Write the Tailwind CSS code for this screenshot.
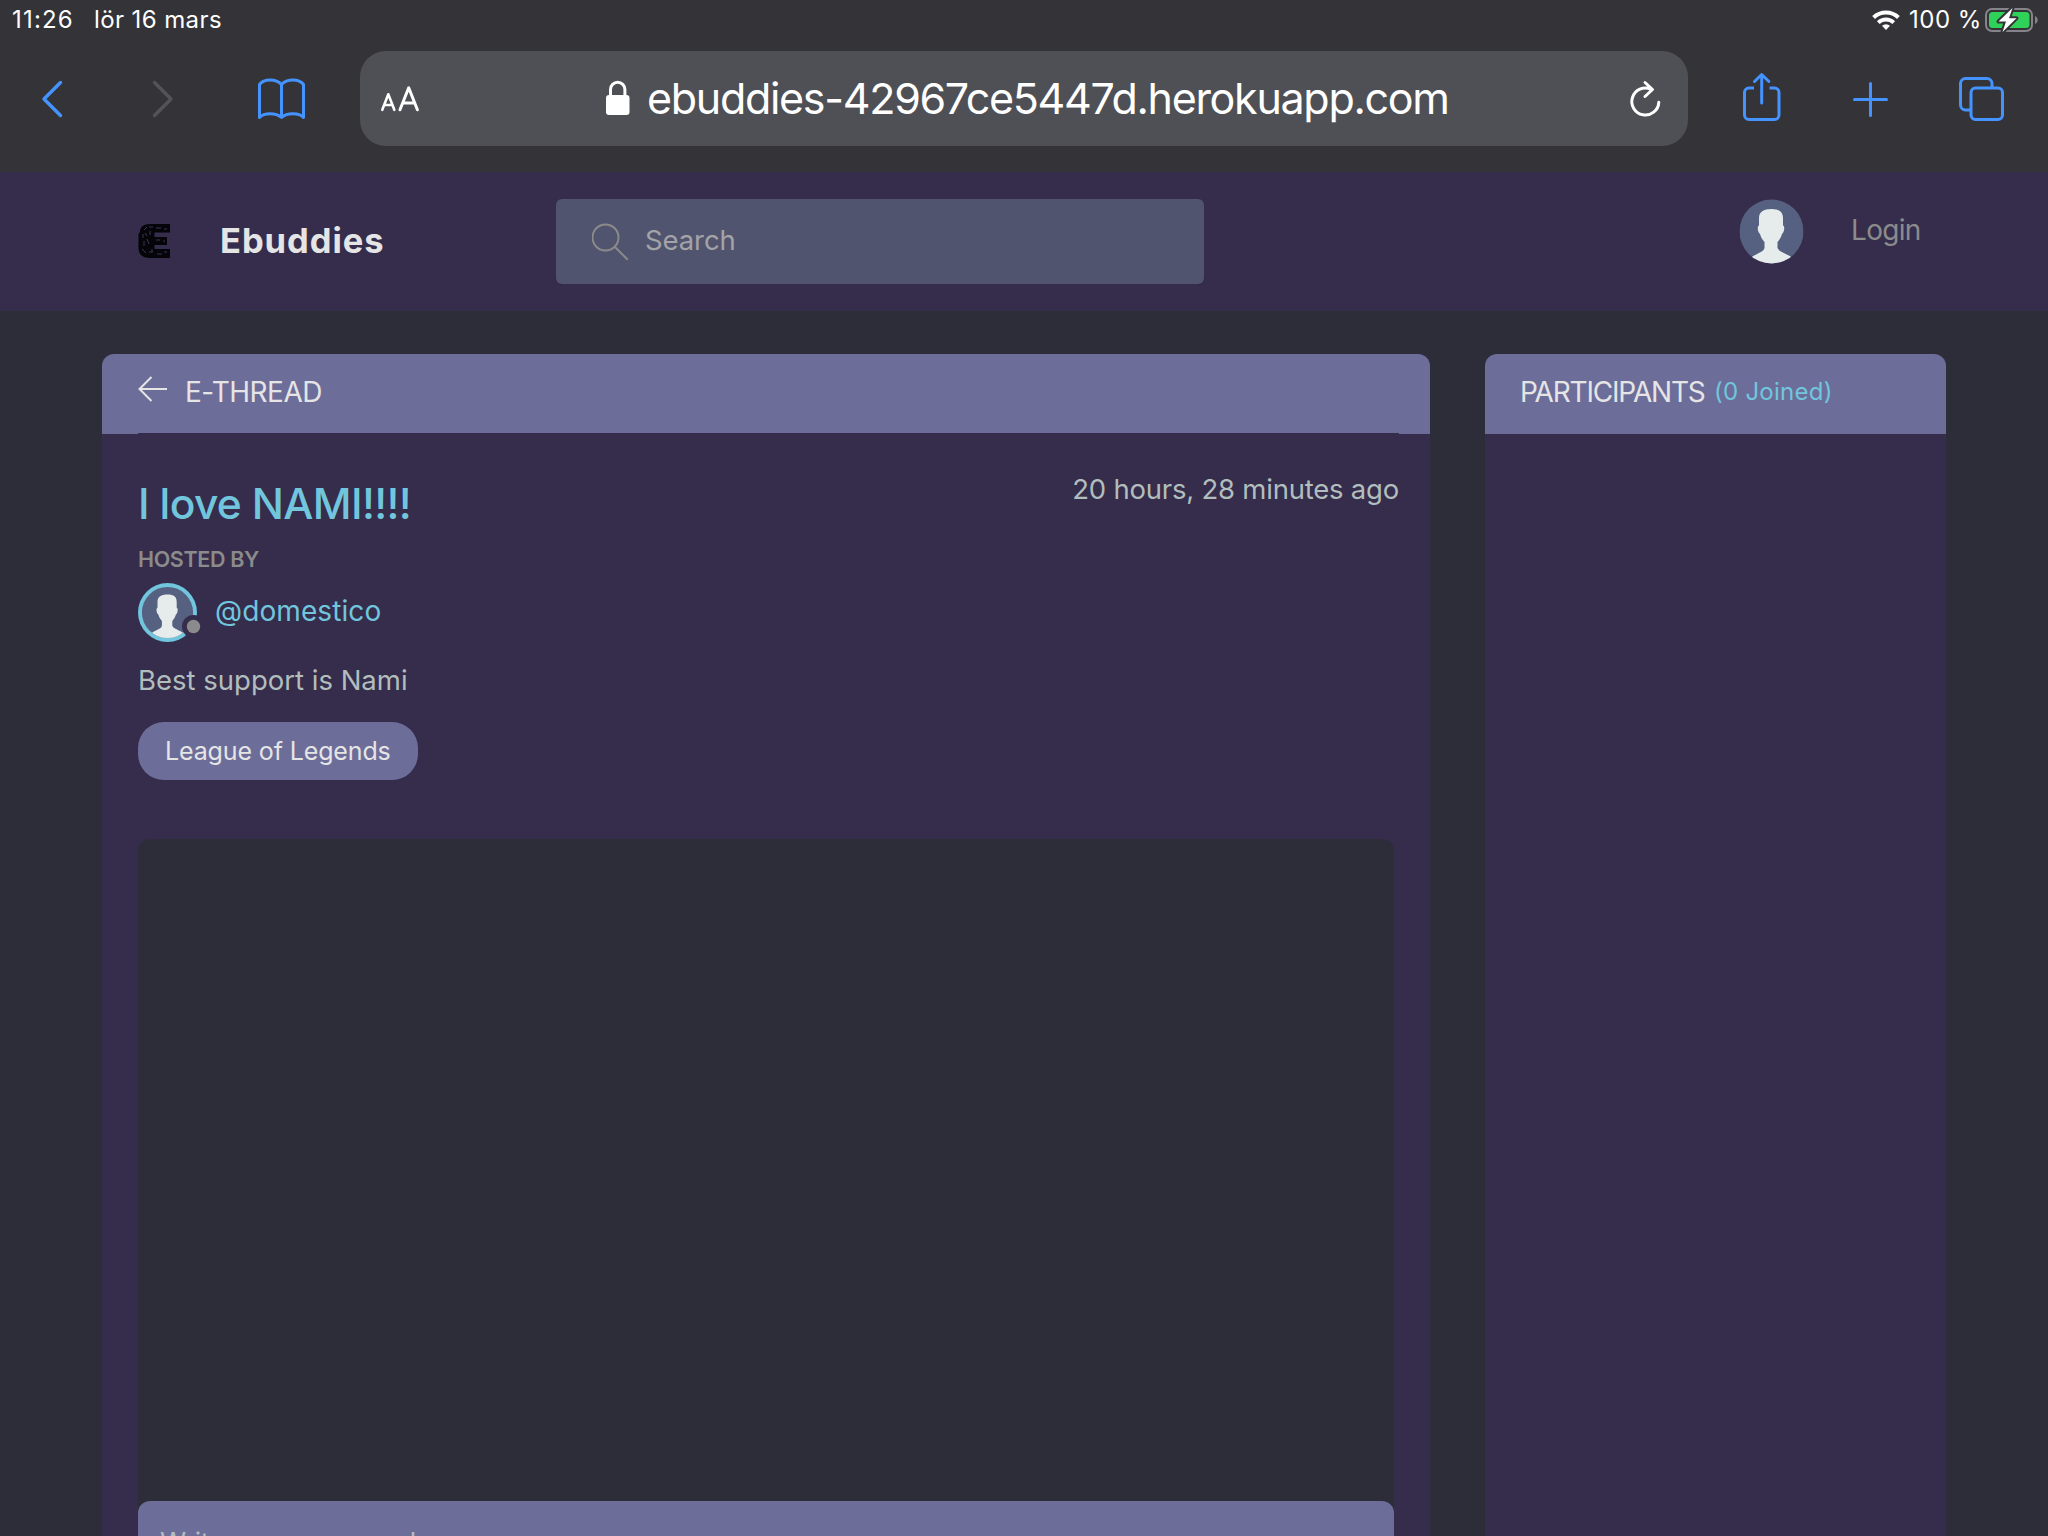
<!DOCTYPE html>
<html lang="sv">
<head>
<meta charset="utf-8">
<title>Ebuddies</title>
<script src="https://cdn.jsdelivr.net/npm/@tailwindcss/browser@4"></script>
</head>
<body class="w-[2048px] h-[1536px] overflow-hidden bg-[#2d2d39] font-['Inter',sans-serif]">
<div class="flex flex-col">
  <div class="h-[172px] bg-[#343338] text-white">
    <div class="flex h-10 items-center pl-3 pr-[10px] text-2xl leading-10">
      <span class="whitespace-nowrap tracking-[1.2px]">11:26</span>
      <span class="ml-[20px] whitespace-nowrap tracking-[0.4px]">lör 16 mars</span>
      <svg class="ml-auto h-10 w-[30px]" viewBox="1871 0 30 40" fill="none" stroke="#fff" stroke-width="4"><path d="M1873.600 17.500a18 18 0 0 1 24.800 0M1878.300 22.600a11.300 11.300 0 0 1 15.400 0"/><path d="M1886 30l-4-4.200a6 6 0 0 1 8 0z" fill="#fff" stroke="none"/></svg>
      <span class="ml-[8px] w-[74px] whitespace-nowrap tracking-[0.5px]">100 %</span>
      <svg class="h-10 w-[55px]" viewBox="1983 0 55 40"><rect x="1986" y="9" width="46" height="22" rx="6" fill="none" stroke="#85848a" stroke-width="2"/><path d="M2035 16v8c3.600-1.500 3.600-6.500 0-8z" fill="#85848a"/><rect x="1989" y="12" width="40.500" height="16" rx="3.500" fill="#30d158"/><path d="M2012.500 8l-14 13.500h7.500l-3.500 10.500 14-13.800h-7.500z" fill="#fff" stroke="#343338" stroke-width="4" paint-order="stroke" stroke-linejoin="round"/></svg>
    </div>
    <div class="mt-[11px] flex h-[95px] items-center">
      <svg class="ml-10 h-[95px] w-6" viewBox="40 51 24 95" fill="none" stroke="#4593ff" stroke-width="3.400" stroke-linecap="round" stroke-linejoin="round"><path d="M60.500 82.500L44 99l16.500 16.500"/></svg>
      <svg class="ml-[86px] h-[95px] w-6" viewBox="150 51 24 95" fill="none" stroke="#545458" stroke-width="3.400" stroke-linecap="round" stroke-linejoin="round"><path d="M154.500 82.500L171 99l-16.500 16.500"/></svg>
      <svg class="ml-[82px] h-[95px] w-[52px]" viewBox="256 51 52 95" fill="none" stroke="#4593ff" stroke-width="3" stroke-linejoin="round"><path d="M281.500 84.500C276 78.500 264 78.500 259.500 84.500V117.500C264 112.500 276 112.500 281.500 117.500C287 112.500 299 112.500 303.500 117.500V84.500C299 78.500 287 78.500 281.500 84.500V117.500"/></svg>
      <div class="ml-[52px] flex h-[95px] w-[1328px] items-center rounded-[26px] bg-[#4f5055]">
        <svg class="ml-5 h-[95px] w-[42px]" viewBox="380 51 42 95" fill="none" stroke="#fff" stroke-width="2.600" stroke-linecap="round" stroke-linejoin="round"><path d="M382.300 109.800l6-15.500 6 15.500M384.600 105h7.400"/><path d="M400 109.800l8.700-22 8.700 22M403 103h11.400" stroke-width="3"/></svg>
        <svg class="ml-[182px] h-[95px] w-[26px]" viewBox="604 51 26 95"><rect x="606" y="95" width="23.500" height="20" rx="3" fill="#fff"/><path d="M610.500 96v-6.500a7.200 7.200 0 0 1 14.400 0V96" fill="none" stroke="#fff" stroke-width="3"/></svg>
        <span class="ml-[17px] whitespace-nowrap text-[43px] leading-[95px] tracking-[-1.3px]">ebuddies-42967ce5447d.herokuapp.com</span>
        <svg class="ml-auto mr-[26px] h-[95px] w-[34px]" viewBox="1628 51 34 95" fill="none" stroke="#fff" stroke-width="3" stroke-linecap="round" stroke-linejoin="round"><path d="M1651 89.300A13.500 13.500 0 1 0 1658.800 102.300M1645 82.500l7.500 7-7.500 7"/></svg>
      </div>
      <svg class="ml-[52px] h-[95px] w-11" viewBox="1740 51 44 95" fill="none" stroke="#4593ff" stroke-width="3" stroke-linecap="round" stroke-linejoin="round"><path d="M1754 88h-5a4.500 4.500 0 0 0-4.500 4.500v22.500a4.500 4.500 0 0 0 4.500 4.500h25.500a4.500 4.500 0 0 0 4.500-4.500v-22.500a4.500 4.500 0 0 0-4.500-4.500h-5" stroke-linecap="butt"/><path d="M1761.700 103V75M1754.500 81.500l7.200-7 7.200 7"/></svg>
      <svg class="ml-[66px] h-[95px] w-[41px]" viewBox="1850 51 41 95" stroke="#4593ff" stroke-width="3" stroke-linecap="round"><path d="M1854.500 99.500h32M1870.500 83.500v32"/></svg>
      <svg class="ml-[66px] h-[95px] w-[49px]" viewBox="1957 51 49 95" fill="none" stroke="#4593ff" stroke-width="3"><rect x="1971" y="88" width="31.500" height="31.500" rx="4.500"/><path d="M1971 110h-5.500a5 5 0 0 1-5-5v-21.500a5 5 0 0 1 5-5h21.500a5 5 0 0 1 5 5v4.500"/></svg>
    </div>
  </div>

  <header class="flex h-[139px] items-start bg-[#352d4b] pt-[27px]">
    <svg class="ml-[138px] mt-[25px] h-[34px] w-[33px]" viewBox="138 224 33 34"><path d="M170 224H151C143 224 140 227 140 232L138.500 234V248C138.500 255 143 258 150 258H170V249H154.500V245H167V237H154.500V232.500H170Z" fill="#050409"/><path d="M144 230l3-3M149 227h4M156 228h5M164 229h3M143 234v4M145 233l2 3M144 241v5M147 239l2 5M142 249l4 4M149 252h4M152 249v3M157 254h5M164 252h3M150 231v4M156 240h4M163 241h2" stroke="#3d3558" stroke-width="1" fill="none"/></svg>
    <span class="ml-[49px] mt-[20px] w-[336px] whitespace-nowrap text-[34.500px] font-bold leading-[44px] tracking-[0.95px] text-[#e5e5e5]">Ebuddies</span>
    <div class="flex h-[85px] w-[648px] items-center rounded-md bg-[#51546e]">
      <svg class="ml-9 h-[38px] w-[38px]" viewBox="592 223 38 38" fill="none" stroke="#8b8b8b" stroke-width="2"><circle cx="605.500" cy="237.500" r="13"/><path d="M614.700 246.700l13 13"/></svg>
      <span class="-mt-0.5 ml-[15px] whitespace-nowrap text-[27.500px] leading-[83px] tracking-[-0.1px] text-[#a3a3a8]">Search</span>
    </div>
    <svg class="ml-[535px] size-[65px]" viewBox="0 0 64 65"><defs><clipPath id="round"><circle cx="32" cy="32.500" r="32"/></clipPath><symbol id="person" viewBox="0 0 64 65"><g clip-path="url(#round)"><path fill="#566080" d="M0 0h64v65H0z"/><path fill="#e6ecec" d="M32 10c8 0 11.500 3 11.500 9v7.500c2 0 1.500 7-1 8.500-.8 3-2.500 6-4.500 8v6c2 4.500 9 5 15 10v8H11v-8c6-5 13-5.500 14-10v-6c-2-2-3.700-5-4.500-8-2.500-1.500-3-8.500-1-8.500V19c0-6 4.500-9 12.500-9z"/></g></symbol></defs><use href="#person" width="64" height="65"/></svg>
    <span class="ml-[47px] mt-[11px] whitespace-nowrap text-[28px] leading-[40px] tracking-[-0.7px] text-[#8b8b8b]">Login</span>
  </header>

  <main class="mt-[43px] flex gap-[55px] pl-[102px]">
    <section class="h-[1182px] w-[1328px] overflow-hidden rounded-t-xl bg-[#352d4b]">
      <div class="h-20 bg-[#6c6d99] pl-9 pr-[31px]">
        <div class="flex h-20 items-center border-b border-[#352d4b] pb-[3px]">
          <svg class="-mt-[7px] h-[26px] w-[30px]" viewBox="138 375.500 30 26" fill="none" stroke="#e5e5e5" stroke-width="2"><path d="M167 388.500h-27.500M151.500 376.500l-12 12 12 12"/></svg>
          <span class="ml-[17px] whitespace-nowrap text-[28px] leading-[40px] tracking-[-0.5px] text-[#e5e5e5]">E-THREAD</span>
        </div>
      </div>
      <div class="pl-9">
        <div class="flex items-start justify-between pr-[31px] pt-[41px]">
          <span class="mt-[4px] whitespace-nowrap text-[42.500px] font-medium leading-[50px] tracking-[-0.65px] text-[#71c6dd]">I love NAMI!!!!</span>
          <span class="whitespace-nowrap text-[27.500px] leading-[28px] tracking-[-0.22px] text-[#b2bdbd]">20 hours, 28 minutes ago</span>
        </div>
        <p class="mt-[18px] whitespace-nowrap text-[21.500px] font-semibold leading-6 tracking-[-0.35px] text-[#8b8b8b]">HOSTED BY</p>
        <div class="mt-3 flex h-[60px] items-center">
          <svg class="h-[60px] w-[64px]" viewBox="0 0 64 60"><circle cx="29.500" cy="29.500" r="29.500" fill="#71c6dd"/><use href="#person" x="3.500" y="3.500" width="52" height="52"/><circle cx="55.500" cy="43.500" r="11.500" fill="#352d4b"/><circle cx="55.500" cy="43.500" r="6.700" fill="#8b8b8b"/></svg>
          <span class="-mt-[5px] ml-[13px] whitespace-nowrap text-[28px] leading-[40px] tracking-[0.1px] text-[#71c6dd]">@domestico</span>
        </div>
        <p class="mt-[17px] whitespace-nowrap text-[27.500px] leading-10 text-[#b2bdbd]">Best support is Nami</p>
        <div class="mt-[22px] flex h-[58px] w-[280px] items-center rounded-[26px] bg-[#6c6d99] pl-[27px] pt-0.5 text-[25px] tracking-[-0.13px] text-[#e5e5e5]">League of Legends</div>
        <div class="mt-[59px] flex h-[697px] w-[1256px] flex-col rounded-t-xl bg-[#2d2d39]">
          <div class="mt-[662px] h-20 shrink-0 whitespace-nowrap rounded-t-xl bg-[#6c6d99] pl-[22px] pt-[21px] text-[26.500px] leading-10 tracking-[-0.4px] text-[#b2bdbd]">Write your message here...</div>
        </div>
      </div>
    </section>
    <aside class="h-[1182px] w-[461px] overflow-hidden rounded-t-xl bg-[#352d4b]">
      <div class="flex h-20 items-center bg-[#6c6d99] pb-[4px] pl-9">
        <span class="-ml-px w-[194px] whitespace-nowrap text-[28px] leading-10 tracking-[-1.2px] text-[#e5e5e5]">PARTICIPANTS</span>
        <span class="whitespace-nowrap text-[24px] leading-10 tracking-[0.25px] text-[#71c6dd]">(0 Joined)</span>
      </div>
    </aside>
  </main>
</div>
</body>
</html>
